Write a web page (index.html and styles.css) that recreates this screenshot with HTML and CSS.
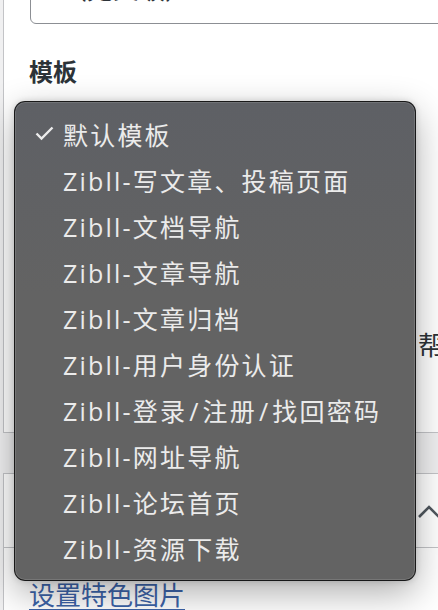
FILE: index.html
```html
<!DOCTYPE html>
<html lang="zh-CN">
<head>
    <meta charset="UTF-8">
    <title>页面属性</title>
    <link rel="stylesheet" href="styles.css">
</head>
<body>
    <div class="sidebar">
        <div class="panel attributes">
            <div class="parent-select">（无父级）</div>
            <h3 class="field-label">模板</h3>
            <p class="help-text">帮助</p>
        </div>

        <div class="panel featured">
            <div class="panel-header">
                <svg class="chevron" width="24" height="16" viewBox="0 0 24 16">
                    <polyline points="2,13 12,3 22,13" fill="none" stroke="#50575e" stroke-width="2.6"/>
                </svg>
            </div>
            <div class="panel-body">
                <a href="#" class="set-image">设置特色图片</a>
            </div>
        </div>
    </div>

    <!-- native template picker, open over the sidebar -->
    <ul class="popup-menu">
        <li class="selected">
            <svg class="check" width="19" height="15" viewBox="0 0 19 15">
                <polyline points="1.5,7.5 6.5,12.5 17.5,1.5" fill="none" stroke="#ececec" stroke-width="2.4"/>
            </svg>
            默认模板
        </li>
        <li>Zibll-写文章、投稿页面</li>
        <li>Zibll-文档导航</li>
        <li>Zibll-文章导航</li>
        <li>Zibll-文章归档</li>
        <li>Zibll-用户身份认证</li>
        <li>Zibll-登录<span class="sep">/</span>注册<span class="sep">/</span>找回密码</li>
        <li>Zibll-网址导航</li>
        <li>Zibll-论坛首页</li>
        <li>Zibll-资源下载</li>
    </ul>
</body>
</html>
```

FILE: styles.css
```css
* {
    margin: 0;
    padding: 0;
    box-sizing: border-box;
}

body {
    position: relative;
    width: 438px;
    height: 610px;
    overflow: hidden;
    background: #f0f0f1;
    color: #1d2327;
    font-family: "Noto Sans CJK SC", "Noto Sans", sans-serif;
}

.sidebar {
    margin-left: 3px;
    width: 480px;
}

.panel {
    background: #fff;
    border: 1px solid #c3c4c7;
    border-right: none;
}

.attributes {
    display: flow-root;
    height: 433px;
    border-top: none;
    padding-left: 25px;
}

.parent-select {
    margin: -30px 0 0 1px;
    height: 54px;
    padding: 0 0 0 30px;
    border: 1px solid #8c8f94;
    border-radius: 6px;
    font-size: 26px;
    line-height: 34px;
    color: #2c3338;
}

.field-label {
    margin-top: 31px;
    font-size: 24px;
    line-height: 32px;
    font-weight: 700;
    color: #2c3338;
}

.help-text {
    margin: 240px 0 0 389px;
    font-size: 26px;
    line-height: 34px;
    color: #2c3338;
    white-space: nowrap;
}

.featured {
    margin-top: 40px;
}

.panel-header {
    height: 74px;
    border-bottom: 1px solid #c3c4c7;
    display: flex;
    align-items: center;
    justify-content: flex-end;
    padding-right: 42px;
}

.chevron {
    display: block;
    margin-top: 2px;
}

.panel-body {
    height: 200px;
    padding: 29px 0 0 25px;
}

.set-image {
    font-size: 26px;
    line-height: 34px;
    color: #3c63a8;
    text-decoration: underline;
    text-underline-offset: 4px;
}

.popup-menu {
    position: absolute;
    left: 14px;
    top: 101px;
    width: 402px;
    height: 480px;
    list-style: none;
    padding: 10px 0;
    background: linear-gradient(#5e6065, #636363 40%);
    border: 1px solid rgba(0, 0, 0, 0.75);
    border-radius: 11px;
    box-shadow: inset 0 0 0 1px rgba(255, 255, 255, 0.12), 0 12px 36px rgba(0, 0, 0, 0.32), 0 0 6px rgba(0, 0, 0, 0.15);
}

.popup-menu li {
    position: relative;
    height: 46px;
    line-height: 46px;
    padding-left: 48px;
    font-family: "Open Sans", "Noto Sans CJK SC", sans-serif;
    font-size: 25px;
    letter-spacing: 2.2px;
    color: #ebebeb;
    white-space: nowrap;
}

.popup-menu .sep {
    margin: 0 2px;
}

.check {
    position: absolute;
    left: 20px;
    top: 14px;
}
```
